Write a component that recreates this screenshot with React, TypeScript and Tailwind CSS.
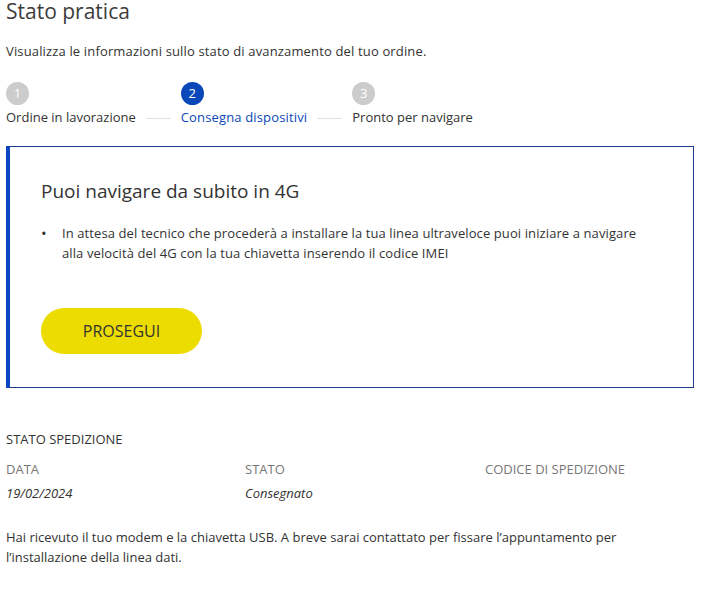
import React from "react";

const steps = [
  { n: "1", label: "Ordine in lavorazione", active: false },
  { n: "2", label: "Consegna dispositivi", active: true },
  { n: "3", label: "Pronto per navigare", active: false },
];

export default function App() {
  return (
    <div className="w-[707px] h-[592px] bg-white text-[#333333] overflow-hidden" style={{ fontFamily: '"Open Sans", sans-serif' }}>
      <div className="px-[6px]">
        <h1 className="text-[21px] leading-[22px] text-[#3c3c3c]">Stato pratica</h1>
        <p className="mt-[20px] text-[13px] tracking-[0.15px] leading-[18px] text-[#333]">
          Visualizza le informazioni sullo stato di avanzamento del tuo ordine.
        </p>
        <div className="mt-[22px] flex items-end">
          {steps.map((s, i) => (
            <React.Fragment key={s.n}>
              <div className="flex flex-col items-start">
                <div
                  className={`w-[23px] h-[23px] rounded-full flex items-center justify-center text-[13px] text-white ${
                    s.active ? "bg-[#0a47b8]" : "bg-[#cccccc]"
                  }`}
                >
                  {s.n}
                </div>
                <div
                  className={`mt-[3px] text-[13px] leading-[18px] ${
                    s.active ? "text-[#0a47b8] tracking-[0.15px]" : "text-[#333]"
                  }`}
                >
                  {s.label}
                </div>
              </div>
              {i < steps.length - 1 && <div className="ml-[10px] mr-[10px] mb-[7px] w-[25px] h-px bg-[#e2e2e2]" />}
            </React.Fragment>
          ))}
        </div>
        <div className="mt-[20px] w-[688px] h-[242px] border border-[#1f3d8c] border-l-[4px] border-l-[#0a47c2] pl-[31px] pt-[32px]">
          <h2 className="text-[19px] leading-[24px] text-[#333]">Puoi navigare da subito in 4G</h2>
          <ul className="mt-[20px] text-[13px] leading-[20px] text-[#333]">
            <li className="flex">
              <span className="w-[21px] shrink-0 text-[15px]">•</span>
              <span className="w-[590px] tracking-[0.1px]">
                In attesa del tecnico che procederà a installare la tua linea ultraveloce puoi iniziare a navigare{" "}
                <br />
                alla velocità del 4G con la tua chiavetta inserendo il codice IMEI
              </span>
            </li>
          </ul>
          <button className="mt-[45px] w-[161px] h-[46px] rounded-full bg-[#ecdc00] text-[16px] text-[#333] flex items-center justify-center">
            PROSEGUI
          </button>
        </div>
        <div className="mt-[42px] text-[13px] leading-[18px] text-[#333]">STATO SPEDIZIONE</div>
        <div className="mt-[12px] grid grid-cols-[239px_240px_1fr] text-[13px] leading-[18px]">
          <div className="text-[#777]">DATA</div>
          <div className="text-[#777]">STATO</div>
          <div className="text-[#777]">CODICE DI SPEDIZIONE</div>
          <div className="mt-[6px] italic text-[#333]">19/02/2024</div>
          <div className="mt-[6px] italic text-[#333]">Consegnato</div>
          <div />
        </div>
        <p className="mt-[25px] w-[640px] text-[13px] leading-[20px] text-[#333]">
          Hai ricevuto il tuo modem e la chiavetta USB. A breve sarai contattato per fissare l’appuntamento per l’installazione della linea dati.
        </p>
      </div>
    </div>
  );
}
